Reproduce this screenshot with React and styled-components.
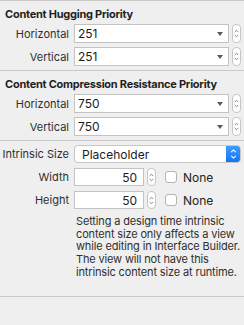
import styled, { createGlobalStyle } from "styled-components";

const Global = createGlobalStyle`
  html, body {
    margin: 0;
    padding: 0;
    background: #efefef;
  }
  body {
    font-family: "Inter", "Roboto", "Liberation Sans", sans-serif;
    -webkit-font-smoothing: antialiased;
  }
`;

const Panel = styled.div`
  width: 244px;
  height: 325px;
  background: #efefef;
  color: #2a2a2a;
  font-size: 11px;
  overflow: hidden;
`;

const Section = styled.section`
  border-top: 1px solid #c9c9c9;
  padding: ${(p) => (p.$title ? "6px" : "4px")} 0 ${(p) => p.$bottom || 4}px;
  display: flex;
  flex-direction: column;
  gap: ${(p) => p.$gap || 4}px;
`;

const Title = styled.div`
  font-weight: 700;
  font-size: 11px;
  line-height: 14px;
  letter-spacing: -0.25px;
  color: #1f1f1f;
  padding-left: 5px;
  margin-bottom: -1px;
`;

const Row = styled.div`
  display: grid;
  grid-template-columns: 69px 1fr;
  column-gap: 5px;
  align-items: center;
  height: ${(p) => p.$h || 19}px;
`;

const Label = styled.label`
  text-align: right;
  color: #303030;
  font-size: 11px;
`;

const Controls = styled.div`
  display: flex;
  align-items: center;
`;

const Combo = styled.div`
  position: relative;
  box-sizing: border-box;
  width: 155px;
  height: 19px;
  background: #fff;
  border: 1px solid #c3c3c3;
  display: flex;
  align-items: center;
  padding-left: 3px;
  font-size: 12px;
  color: #1c1c1c;
`;

const Caret = styled.span`
  position: absolute;
  right: 5px;
  top: 7px;
  width: 0;
  height: 0;
  border-left: 3.5px solid transparent;
  border-right: 3.5px solid transparent;
  border-top: 4px solid #5a5a5a;
`;

const NumField = styled.div`
  box-sizing: border-box;
  width: 70px;
  height: 18px;
  background: #fff;
  border: 1px solid #c3c3c3;
  display: flex;
  align-items: center;
  justify-content: flex-end;
  padding-right: 6px;
  font-size: 12px;
  color: #1c1c1c;
`;

const StepBox = styled.div`
  box-sizing: border-box;
  width: 9px;
  height: ${(p) => p.$h || 19}px;
  margin-left: ${(p) => p.$ml || 3}px;
  border: 1px solid #c6c6c6;
  border-radius: 4px;
  background: #fff;
  display: flex;
  align-items: center;
  justify-content: center;
`;

const Popup = styled.div`
  box-sizing: border-box;
  width: 167px;
  height: 18px;
  background: #fff;
  border: 1px solid #c6c6c6;
  border-radius: 4px;
  display: flex;
  align-items: stretch;
  overflow: hidden;
  font-size: 12px;
  color: #1c1c1c;
`;

const PopupText = styled.div`
  flex: 1;
  display: flex;
  align-items: center;
  padding-left: 7px;
`;

const PopupArrow = styled.div`
  width: 14px;
  background: linear-gradient(#3f9bff, #1475f5);
  display: flex;
  align-items: center;
  justify-content: center;
`;

const Check = styled.span`
  box-sizing: border-box;
  width: 12px;
  height: 12px;
  margin-left: 9px;
  border: 1px solid #b3b3b3;
  border-radius: 3px;
  background: #fff;
`;

const CheckLabel = styled.span`
  margin-left: 6px;
  font-size: 12px;
  color: #242424;
`;

const Note = styled.p`
  margin: 1px 0 0 76px;
  width: 166px;
  font-size: 11px;
  line-height: 12.7px;
  letter-spacing: -0.15px;
  color: #303030;
`;

const Bottom = styled.div`
  border-top: 1px solid #c9c9c9;
`;

function Chevrons({ color = "#666", w = 7, h = 13 }) {
  return (
    <svg width={w} height={h} viewBox="0 0 7 13">
      <path d="M1 4.5 L3.5 2 L6 4.5" fill="none" stroke={color} strokeWidth="1.1" />
      <path d="M1 8.5 L3.5 11 L6 8.5" fill="none" stroke={color} strokeWidth="1.1" />
    </svg>
  );
}

function PriorityRow({ label, value }) {
  return (
    <Row>
      <Label>{label}</Label>
      <Controls>
        <Combo>
          {value}
          <Caret />
        </Combo>
        <StepBox>
          <Chevrons w={5} h={13} />
        </StepBox>
      </Controls>
    </Row>
  );
}

function SizeRow({ label, value }) {
  return (
    <Row $h={18}>
      <Label>{label}</Label>
      <Controls>
        <NumField>{value}</NumField>
        <StepBox $h={18} $ml={3}>
          <Chevrons w={5} h={13} />
        </StepBox>
        <Check />
        <CheckLabel>None</CheckLabel>
      </Controls>
    </Row>
  );
}

export default function App() {
  return (
    <Panel>
      <Global />
      <Section $title>
        <Title>Content Hugging Priority</Title>
        <PriorityRow label="Horizontal" value="251" />
        <PriorityRow label="Vertical" value="251" />
      </Section>
      <Section $title>
        <Title>Content Compression Resistance Priority</Title>
        <PriorityRow label="Horizontal" value="750" />
        <PriorityRow label="Vertical" value="750" />
      </Section>
      <Section $gap={5} $bottom={17}>
        <Row $h={18}>
          <Label>Intrinsic Size</Label>
          <Controls>
            <Popup>
              <PopupText>Placeholder</PopupText>
              <PopupArrow>
                <Chevrons color="#fff" w={7} h={12} />
              </PopupArrow>
            </Popup>
          </Controls>
        </Row>
        <SizeRow label="Width" value="50" />
        <SizeRow label="Height" value="50" />
        <Note>
          Setting a design time intrinsic content size only affects a view
          while editing in Interface Builder. The view will not have this
          intrinsic content size at runtime.
        </Note>
      </Section>
      <Bottom />
    </Panel>
  );
}
